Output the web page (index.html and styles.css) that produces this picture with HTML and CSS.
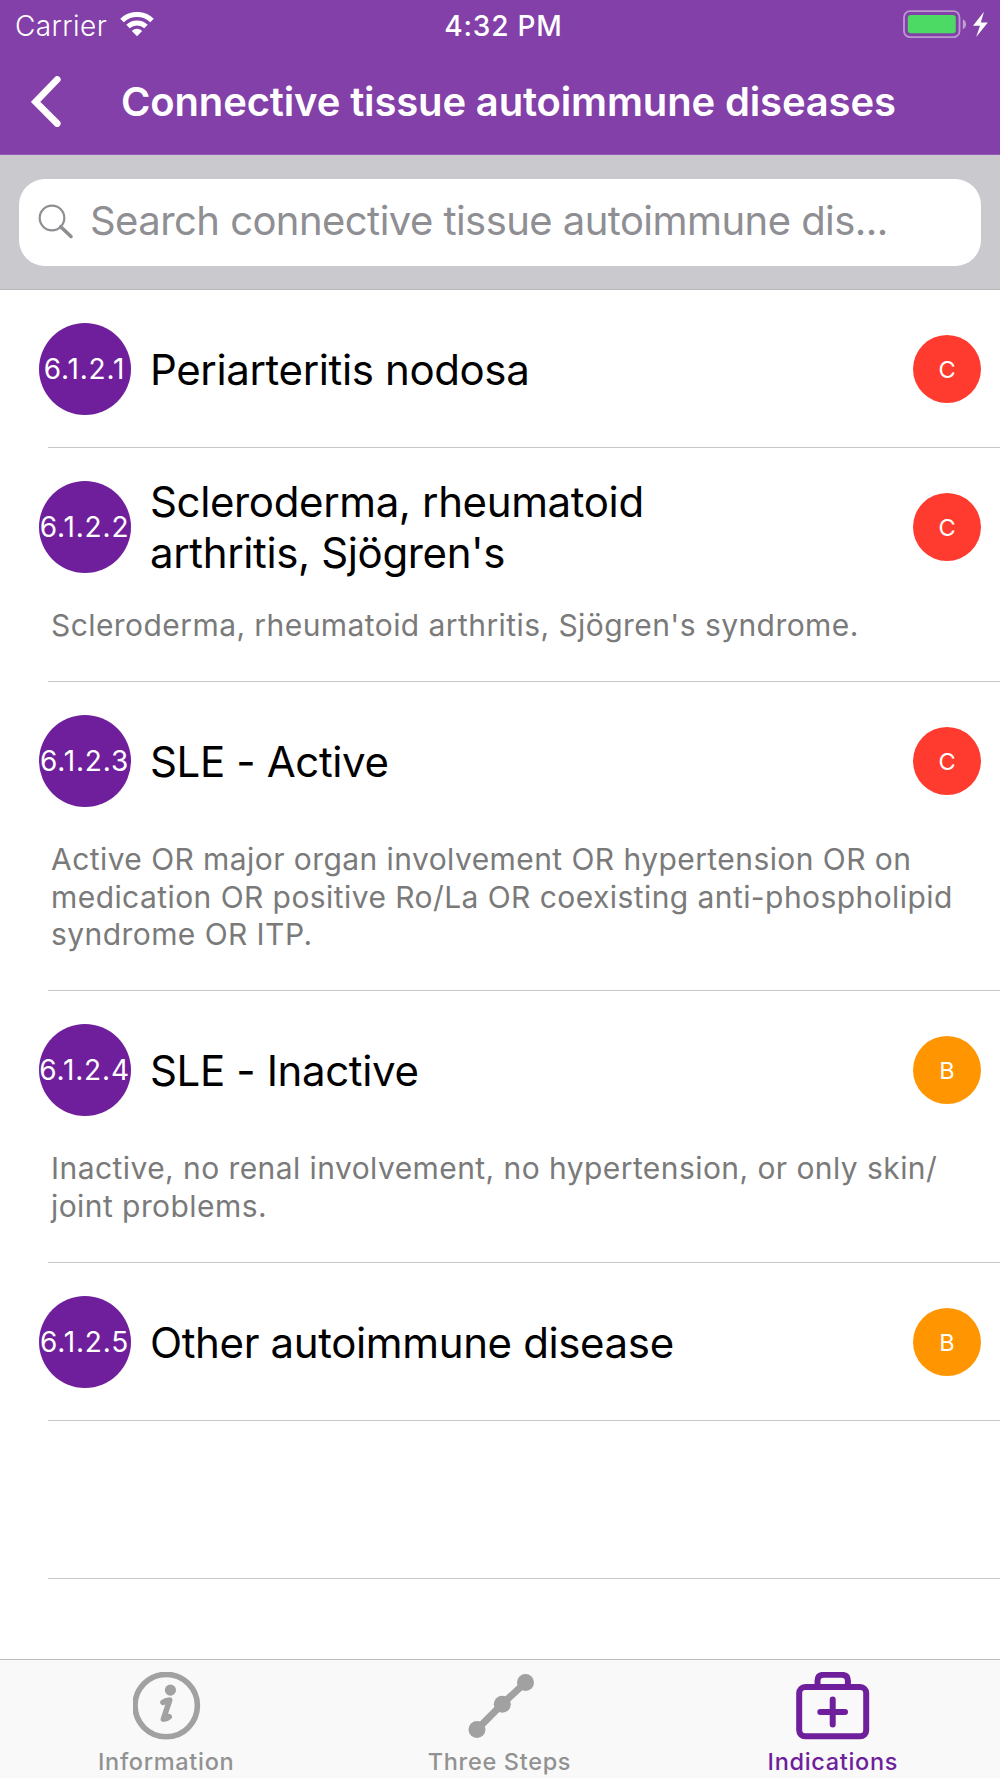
FILE: index.html
```html
<!DOCTYPE html>
<html lang="en">
<head>
    <meta charset="UTF-8">
    <meta name="viewport" content="width=device-width, initial-scale=1.0">
    <title>Connective tissue autoimmune diseases</title>
    <link rel="stylesheet" href="styles.css">
</head>
<body>

    <header class="top">
        <div class="status-bar">
            <div class="status-left">
                <span class="carrier">Carrier</span>
                <svg class="wifi" width="34" height="25" viewBox="0 0 34 25">
                    <g fill="none" stroke="#fff" stroke-width="5">
                        <path d="M2 8.5A21.5 21.5 0 0 1 32 8.5"/>
                        <path d="M8 14.5A13 13 0 0 1 26 14.5"/>
                    </g>
                    <path d="M17 24.3L11.8 19A7.4 7.4 0 0 1 22.2 19Z" fill="#fff"/>
                </svg>
            </div>
            <span class="time">4:32 PM</span>
            <div class="status-right">
                <svg width="85" height="28" viewBox="0 0 85 28">
                    <rect x="1" y="1.2" width="55.5" height="26" rx="6" fill="none" stroke="#fff" stroke-opacity="0.45" stroke-width="1.8"/>
                    <rect x="4.8" y="5" width="48" height="18.2" rx="3" fill="#4cd964"/>
                    <path d="M59.8 9.2Q63 10.8 63 14.2Q63 17.6 59.8 19.2Z" fill="#fff" fill-opacity="0.5"/>
                    <path d="M81 1.8L70 15.8H77L73.2 27L84.8 12.4H77.8Z" fill="#fff"/>
                </svg>
            </div>
        </div>
        <nav class="nav-bar">
            <svg class="back" width="30" height="52" viewBox="0 0 30 52">
                <path d="M26.2 3.5L4.6 25.8L26.2 47.5" fill="none" stroke="#fff" stroke-width="6.8" stroke-linecap="round" stroke-linejoin="miter"/>
            </svg>
            <h1>Connective tissue autoimmune diseases</h1>
        </nav>
    </header>

    <div class="search-bar">
        <div class="search-field">
            <svg width="36" height="36" viewBox="0 0 36 36" fill="none" stroke="#8e8e93">
                <circle cx="14" cy="14" r="12.3" stroke-width="2.2"/>
                <path d="M22.7 22.7L33 32.5" stroke-width="3.6" stroke-linecap="round"/>
            </svg>
            <span class="placeholder">Search connective tissue autoimmune dis...</span>
        </div>
    </div>

    <main class="list">
        <div class="row">
            <div class="row-head">
                <span class="code">6.1.2.1</span>
                <h2>Periarteritis nodosa</h2>
                <span class="badge red">C</span>
            </div>
        </div>
        <div class="row">
            <div class="row-head">
                <span class="code">6.1.2.2</span>
                <h2>Scleroderma, rheumatoid<br>arthritis, Sjögren's</h2>
                <span class="badge red">C</span>
            </div>
            <p>Scleroderma, rheumatoid arthritis, Sjögren's syndrome.</p>
        </div>
        <div class="row">
            <div class="row-head">
                <span class="code">6.1.2.3</span>
                <h2>SLE - Active</h2>
                <span class="badge red">C</span>
            </div>
            <p>Active OR major organ involvement OR hypertension OR on<br>medication OR positive Ro/La OR coexisting anti-phospholipid<br>syndrome OR ITP.</p>
        </div>
        <div class="row">
            <div class="row-head">
                <span class="code">6.1.2.4</span>
                <h2>SLE - Inactive</h2>
                <span class="badge orange">B</span>
            </div>
            <p>Inactive, no renal involvement, no hypertension, or only skin/<br>joint problems.</p>
        </div>
        <div class="row">
            <div class="row-head">
                <span class="code">6.1.2.5</span>
                <h2>Other autoimmune disease</h2>
                <span class="badge orange">B</span>
            </div>
        </div>
        <div class="row empty"></div>
    </main>

    <footer class="tab-bar">
        <div class="tab">
            <svg width="68" height="68" viewBox="0 0 68 68">
                <circle cx="33.2" cy="33.6" r="31.2" fill="none" stroke="#a1a1a1" stroke-width="5.6"/>
                <circle cx="37.4" cy="18.1" r="5.6" fill="#a1a1a1"/>
                <path d="M30 30.4Q32.2 28.4 36.7 28.1L30.4 47.1Q34.2 46.9 36.2 44.8" fill="none" stroke="#a1a1a1" stroke-width="5.6" stroke-linecap="round" stroke-linejoin="round"/>
            </svg>
            <span>Information</span>
        </div>
        <div class="tab">
            <svg width="68" height="68" viewBox="0 0 68 68">
                <path d="M11 57.5L36.3 32L59.5 10.5" fill="none" stroke="#a1a1a1" stroke-width="7"/>
                <g fill="#a1a1a1">
                    <circle cx="11" cy="57.5" r="8.5"/>
                    <circle cx="36.3" cy="32.3" r="8.5"/>
                    <circle cx="59.5" cy="10.5" r="8.5"/>
                </g>
            </svg>
            <span>Three Steps</span>
        </div>
        <div class="tab active">
            <svg width="74" height="68" viewBox="0 0 74 68" fill="none" stroke="#6f1f9b" stroke-width="6">
                <rect x="3.2" y="15" width="67" height="49.3" rx="6"/>
                <path d="M21.5 14.5V9Q21.5 2.8 27.8 2.8H45.6Q51.9 2.8 51.9 9V14.5"/>
                <path d="M36.7 27.5V52.5M24.3 39.9H49" stroke-linecap="round"/>
            </svg>
            <span>Indications</span>
        </div>
    </footer>

</body>
</html>
```
FILE: styles.css
```css
* {
    box-sizing: border-box;
}
body {
    margin: 0;
    width: 1000px;
    height: 1778px;
    display: flex;
    flex-direction: column;
    overflow: hidden;
    background: #fff;
    color: #000;
    font-family: Inter, "Liberation Sans", sans-serif;
}
h1, h2, p {
    margin: 0;
    font-weight: 400;
}
svg {
    display: block;
    flex: none;
}
.top {
    height: 155px;
    background: #8440a9;
    border-bottom: 1px solid #9558b5;
    color: #fff;
}
.status-bar {
    height: 48px;
    padding: 4px 12px 0 15px;
    display: grid;
    grid-template-columns: 1fr auto 1fr;
    align-items: center;
    font-size: 28px;
}
.status-left {
    display: flex;
    align-items: center;
    gap: 13px;
}
.carrier {
    font-weight: 350;
    letter-spacing: 0.4px;
}
.wifi {
    margin-top: -3px;
}
.time {
    padding-left: 4px;
    font-weight: 500;
    letter-spacing: 0.8px;
}
.status-right {
    display: flex;
    justify-content: flex-end;
    margin-top: -4px;
}
.nav-bar {
    height: 106px;
    display: flex;
    align-items: center;
    padding-left: 31px;
}
.back {
    margin-top: 2px;
}
.nav-bar h1 {
    margin-left: 60px;
    font-size: 40px;
    font-weight: 600;
    letter-spacing: -0.15px;
    white-space: nowrap;
}
.search-bar {
    height: 135px;
    padding: 24px 19px;
    background: #c9c9ce;
    border-bottom: 1px solid #b8b8bb;
}
.search-field {
    height: 87px;
    display: flex;
    align-items: center;
    padding: 0 0 2px 19px;
    gap: 16px;
    border-radius: 26px;
    background: #fff;
}
.placeholder {
    padding-bottom: 2px;
    color: #8e8e93;
    font-size: 40px;
    letter-spacing: -0.55px;
    white-space: nowrap;
}
.list {
    flex: 1;
    padding-left: 48px;
}
.row {
    border-bottom: 1px solid #c8c7cc;
}
.row-head {
    height: 157px;
    margin-left: -9px;
    padding-right: 19px;
    display: flex;
    align-items: center;
}
.code {
    flex: none;
    width: 92px;
    height: 92px;
    padding: 1px 1px 0 0;
    border-radius: 50%;
    display: flex;
    align-items: center;
    justify-content: center;
    background: #6f1f9b;
    color: #fff;
    font-size: 28px;
    letter-spacing: 0.85px;
}
.row h2 {
    flex: 1;
    margin-left: 19px;
    padding-top: 1px;
    font-size: 42px;
    line-height: 51px;
    letter-spacing: -0.37px;
    white-space: nowrap;
}
.row p {
    padding: 2px 0 36.5px 3px;
    color: #7a7a7a;
    font-size: 30px;
    line-height: 37.6px;
    letter-spacing: 0.43px;
    white-space: nowrap;
}
.badge {
    flex: none;
    width: 68px;
    height: 68px;
    padding-top: 1px;
    border-radius: 50%;
    display: flex;
    align-items: center;
    justify-content: center;
    color: #fff;
    font-size: 23.5px;
}
.red {
    background: #ff3b30;
}
.orange {
    background: #ff9500;
}
.empty {
    height: 158px;
}
.tab-bar {
    height: 119px;
    display: grid;
    grid-template-columns: repeat(3, 1fr);
    background: #f9f9f9;
    border-top: 1px solid #bdbdbd;
    color: #929292;
}
.tab {
    display: flex;
    flex-direction: column;
    align-items: center;
    padding-top: 12px;
    font-size: 23.5px;
    font-weight: 500;
    letter-spacing: 0.68px;
}
.tab span {
    margin-top: 8px;
    padding-right: 1px;
    line-height: 28px;
}
.tab.active {
    color: #6f1f9b;
}
```
